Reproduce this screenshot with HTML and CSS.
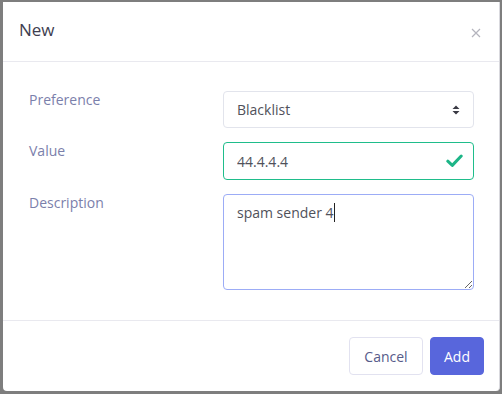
FILE: index.html
```html
<!DOCTYPE html>
<html>
<head>
<meta charset="utf-8">
<link rel="stylesheet" href="styles.css">
</head>
<body>
<div class="modal">
  <div class="modal-header">
    <h5 class="modal-title">New</h5>
    <button class="close" type="button" aria-label="Close">
      <svg width="10" height="10" viewBox="0 0 10 10"><path d="M1 1 L9 9 M9 1 L1 9" stroke="#b4b4bd" stroke-width="1.2" fill="none"/></svg>
    </button>
  </div>
  <div class="modal-body">
    <div class="form-row">
      <label class="form-label">Preference</label>
      <div class="field field-select">
        <select class="control">
          <option>Blacklist</option>
          <option>Whitelist</option>
        </select>
        <svg class="select-arrows" width="8" height="10" viewBox="0 0 8 10"><path d="M4 0.5 L7.5 4 L0.5 4 Z M0.5 6 L7.5 6 L4 9.5 Z" fill="#3a3a44"/></svg>
      </div>
    </div>
    <div class="form-row">
      <label class="form-label">Value</label>
      <div class="field">
        <input class="control control-valid" type="text" value="44.4.4.4">
        <svg class="check" width="17" height="14" viewBox="0 0 17 14"><path d="M1.8 7.2 L6.3 11.4 L15.2 2" stroke="#1db587" stroke-width="3" fill="none" stroke-linecap="round" stroke-linejoin="round"/></svg>
      </div>
    </div>
    <div class="form-row">
      <label class="form-label">Description</label>
      <div class="field">
        <textarea class="control control-area control-focus">spam sender 4</textarea>
        <span class="caret"></span>
      </div>
    </div>
  </div>
  <div class="modal-footer">
    <button class="btn btn-light" type="button">Cancel</button>
    <button class="btn btn-primary" type="button">Add</button>
  </div>
</div>
</body>
</html>
```

FILE: styles.css
```css
html, body {
  margin: 0;
  padding: 0;
}

body {
  width: 502px;
  height: 394px;
  background: #7e7e7e;
  font-family: "Open Sans", "DejaVu Sans", sans-serif;
  overflow: hidden;
  padding-top: 2px;
  padding-left: 3px;
  box-sizing: border-box;
}

.modal {
  width: 497px;
  height: 389px;
  background: #ffffff;
  border-right: 1px solid #d9d9de;
  border-radius: 0 0 4px 4px;
  box-sizing: border-box;
  display: flex;
  flex-direction: column;
}

.modal-header {
  height: 60px;
  box-sizing: border-box;
  border-bottom: 1px solid #e9e9ef;
  display: flex;
  align-items: center;
  justify-content: space-between;
  padding: 0 18px 0 16px;
}

.modal-title {
  margin: 0;
  font-size: 17px;
  font-weight: 400;
  color: #3e3e50;
  line-height: 20px;
  margin-top: -3px;
}

.close {
  border: 0;
  background: transparent;
  padding: 0;
  width: 10px;
  height: 10px;
  display: flex;
  margin-top: 3px;
}

.modal-body {
  padding: 29px 24px 30px 26px;
  display: flex;
  flex-direction: column;
  gap: 14px;
  border-bottom: 1px solid #e9e9ef;
}

.form-row {
  display: grid;
  grid-template-columns: 194px 251px;
  align-items: start;
}

.form-label {
  font-size: 14px;
  line-height: 17px;
  color: #7b80ab;
}

.field {
  position: relative;
}

.control {
  display: block;
  width: 251px;
  height: 38px;
  box-sizing: border-box;
  border: 1px solid #e2e4ec;
  border-radius: 4px;
  background: #fff;
  padding: 0 13px;
  font-family: "Open Sans", "DejaVu Sans", sans-serif;
  font-size: 14px;
  color: #50515a;
  outline: none;
  margin: 0;
}

.field-select .control {
  height: 37px;
  appearance: none;
  -webkit-appearance: none;
}

.select-arrows {
  position: absolute;
  left: 229px;
  top: 14px;
  pointer-events: none;
}

.control-valid {
  border-color: #1fbd8b;
}

.check {
  position: absolute;
  left: 223px;
  top: 12px;
}

.control-area {
  height: 96px;
  padding: 7px 13px;
  line-height: 21px;
  resize: vertical;
  overflow: hidden;
}

.control-focus {
  border-color: #9cacf6;
}

.caret {
  position: absolute;
  left: 111px;
  top: 9px;
  width: 1px;
  height: 19px;
  background: #222;
}

.modal-footer {
  flex: 1;
  display: flex;
  justify-content: flex-end;
  align-items: center;
  gap: 7px;
  padding: 0 15px 0 0;
}

.btn {
  height: 38px;
  box-sizing: border-box;
  border-radius: 4px;
  font-family: "Open Sans", "DejaVu Sans", sans-serif;
  font-size: 14px;
  padding: 0 12px;
  margin: 0;
}

.btn-light {
  width: 74px;
  background: #ffffff;
  border: 1px solid #e2e2f0;
  color: #575b8a;
}

.btn-primary {
  width: 54px;
  background: #5866dc;
  border: 1px solid #5866dc;
  color: #ffffff;
}
```
